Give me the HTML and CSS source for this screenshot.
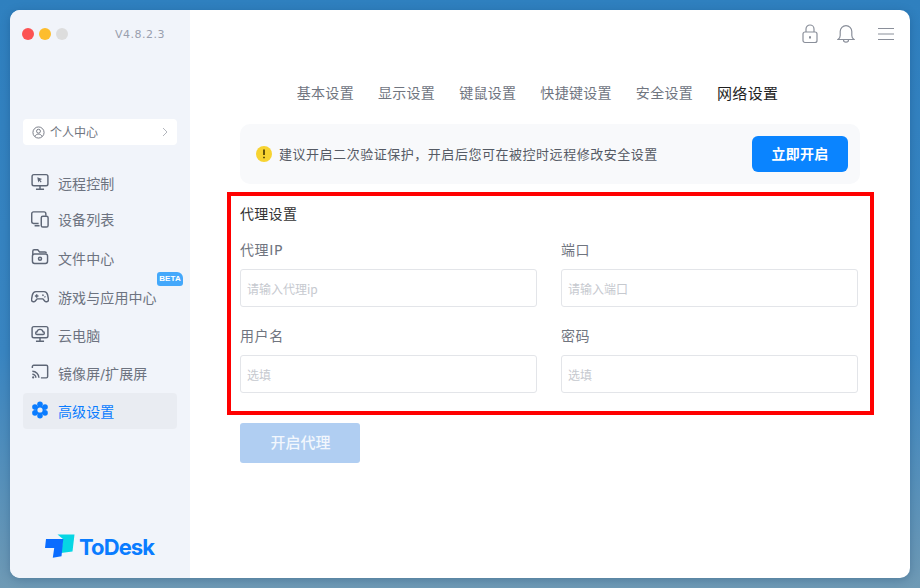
FILE: index.html
```html
<!DOCTYPE html>
<html lang="zh">
<head>
<meta charset="utf-8">
<title>ToDesk</title>
<link rel="stylesheet" href="styles.css">
</head>
<body>
<div class="window">
  <aside class="sidebar">
    <div class="titlebar">
      <div class="lights"><i class="light red"></i><i class="light yellow"></i><i class="light grey"></i></div>
      <span class="version">V4.8.2.3</span>
    </div>
    <div class="profile">
      <svg class="profile-icon" viewBox="0 0 14 14"><circle cx="7" cy="7" r="6"/><circle cx="7" cy="5.600" r="2.100"/><path d="M3.300 11.200c.6-1.800 2-2.400 3.700-2.400s3.100.6 3.700 2.400"/></svg>
      <span class="profile-name">个人中心</span>
      <svg class="chevron" viewBox="0 0 8 10"><path d="M2 1l4 4-4 4"/></svg>
    </div>
    <nav class="nav">
      <a class="item">
        <svg class="ico" viewBox="0 0 20 20"><rect x="1.200" y="1.800" width="17.600" height="12.400" rx="2"/><path d="M10 14.400v3.600M5.500 18h9"/><path class="fill" d="M7 4.800l5.400 2-2.200 1 1.600 2-1 .8-1.600-2-1.200 2z"/></svg>
        <span>远程控制</span>
      </a>
      <a class="item tight">
        <svg class="ico ico-device" viewBox="0 0 20 20"><path d="M8.500 13.800H2.800a2 2 0 0 1-2-2V3a2 2 0 0 1 2-2h11.700a2 2 0 0 1 2 2v2.400"/><rect x="11.400" y="5.800" width="7.600" height="12" rx="1.800"/><path d="M4 16.400h5.500"/></svg>
        <span>设备列表</span>
      </a>
      <a class="item wide">
        <svg class="ico" viewBox="0 0 20 20"><path d="M2 8V3.500A1.500 1.500 0 0 1 3.500 2h4l2 2.400h6a1.500 1.500 0 0 1 1.500 1.500"/><rect x="1.600" y="6.600" width="16.800" height="10.600" rx="2.400"/><circle cx="10" cy="11.900" r="1.700"/></svg>
        <span>文件中心</span>
      </a>
      <a class="item wide beta-row">
        <svg class="ico ico-game" viewBox="0 0 20 16"><path d="M5.500 1.500h9c2.300 0 3.500 1.600 4 3.700l.9 4.800c.4 2.400-2.600 3.800-4.200 1.900l-2-2.400H6.800l-2 2.400C3.200 13.800.2 12.400.6 10l.9-4.800C2 3.100 3.200 1.500 5.500 1.500z"/><path d="M4.300 6.300h4M6.300 4.300v4"/><path d="M12.700 4.800l1.200 1.200M15 6.800l1 1"/></svg>
        <span>游戏与应用中心</span>
        <b class="beta">BETA</b>
      </a>
      <a class="item">
        <svg class="ico" viewBox="0 0 20 20"><rect x="1.200" y="1.800" width="17.600" height="12.400" rx="2"/><path d="M10 14.400v3.600M5.500 18h9"/><path d="M6.800 10.500h6.400a1.500 1.500 0 0 0 .2-3 3.500 3.500 0 0 0-6.800 0 1.500 1.500 0 0 0 .2 3z"/></svg>
        <span>云电脑</span>
      </a>
      <a class="item">
        <svg class="ico" viewBox="0 0 20 20"><path d="M1.500 5.500V4A1.500 1.500 0 0 1 3 2.500h14A1.500 1.500 0 0 1 18.500 4v11a1.500 1.500 0 0 1-1.500 1.500h-6"/><path d="M1.500 9.200a7.300 7.300 0 0 1 7.300 7.300M1.500 12.600a3.900 3.900 0 0 1 3.900 3.900"/><circle class="fill" cx="2.400" cy="16" r="1.200"/></svg>
        <span>镜像屏/扩展屏</span>
      </a>
      <a class="item active">
        <svg class="ico gear" viewBox="0 0 20 20">
          <circle cx="10" cy="3.600" r="3.100"/><circle cx="15.600" cy="6.800" r="3.100"/><circle cx="15.600" cy="13.200" r="3.100"/><circle cx="10" cy="16.400" r="3.100"/><circle cx="4.400" cy="13.200" r="3.100"/><circle cx="4.400" cy="6.800" r="3.100"/><circle cx="10" cy="10" r="5"/><circle class="hole" cx="10" cy="10" r="2.900"/>
        </svg>
        <span>高级设置</span>
      </a>
    </nav>
    <div class="logo">
      <svg class="logo-mark" viewBox="0 0 32 26"><path class="cyan" d="M12.500 .5H29.500L27.500 17.500L16 19L18 5z"/><path class="blue" d="M1 5H18.300L16.500 22.300L7.800 23.700L9.200 14H0z"/></svg>
      <span class="logo-text">ToDesk</span>
    </div>
  </aside>
  <main class="main">
    <header class="topbar">
      <svg class="top-ico lock" viewBox="0 0 16 20"><path d="M4 8V5a4 4 0 0 1 8 0v3"/><rect x="1" y="8" width="14" height="10.500" rx="2"/><path d="M8 12.200v2.200" class="thick"/></svg>
      <svg class="top-ico bell" viewBox="0 0 18 20"><path d="M1 15.500c1.500-1 2.200-2.200 2.200-4V7.500a5.800 5.800 0 0 1 11.600 0v4c0 1.800.7 3 2.200 4z"/><path d="M6.500 16c0 2.800 5 2.800 5 0"/></svg>
      <svg class="top-ico menu" viewBox="0 0 16 14"><path d="M0 1.500h16M0 7h16M0 12.500h16"/></svg>
    </header>
    <div class="tabs">
      <span class="tab">基本设置</span>
      <span class="tab">显示设置</span>
      <span class="tab">键鼠设置</span>
      <span class="tab">快捷键设置</span>
      <span class="tab">安全设置</span>
      <span class="tab current">网络设置</span>
    </div>
    <div class="content">
      <div class="notice">
        <svg class="warn" viewBox="0 0 16 16"><circle cx="8" cy="8" r="8"/><path d="M8 3.600v5.300M8 10.800v1.500"/></svg>
        <span class="notice-text">建议开启二次验证保护，开启后您可在被控时远程修改安全设置</span>
        <button class="primary">立即开启</button>
      </div>
      <section class="proxy">
        <h2>代理设置</h2>
        <div class="grid">
          <label class="field"><span>代理IP</span><input placeholder="请输入代理ip"></label>
          <label class="field"><span>端口</span><input placeholder="请输入端口"></label>
          <label class="field"><span>用户名</span><input placeholder="选填"></label>
          <label class="field"><span>密码</span><input placeholder="选填"></label>
        </div>
      </section>
      <button class="start">开启代理</button>
    </div>
  </main>
</div>
</body>
</html>
```
FILE: styles.css
```css
* { box-sizing: border-box; }
html, body { height: 100%; }
body {
  margin: 0;
  padding: 10px;
  overflow: hidden;
  background: linear-gradient(180deg, #2f80bf 0%, #3a86c2 60%, #6f9ab5 100%);
  font-family: "DejaVu Sans", "Noto Sans CJK SC", sans-serif;
}
.window {
  display: flex;
  width: 900px;
  height: 568px;
  border-radius: 10px;
  overflow: hidden;
  background: #fff;
  box-shadow: 0 2px 10px rgba(0, 40, 80, .25);
}

/* sidebar */
.sidebar {
  width: 180px;
  flex: none;
  display: flex;
  flex-direction: column;
  background: #f1f4fa;
  padding: 0 13px;
}
.titlebar {
  display: flex;
  align-items: center;
  height: 48px;
}
.lights { display: flex; gap: 5px; margin-left: -1px; }
.light { width: 12px; height: 12px; border-radius: 50%; }
.red { background: #fc5353; }
.yellow { background: #fdbd2d; }
.grey { background: #dddddd; }
.version {
  margin-left: 47px;
  font-size: 11px;
  letter-spacing: .5px;
  color: #9a9fae;
}
.profile {
  display: flex;
  align-items: center;
  height: 26px;
  margin-top: 61px;
  padding: 0 9px;
  background: #fff;
  border-radius: 4px;
}
.profile-icon { width: 13px; height: 13px; fill: none; stroke: #70757f; stroke-width: 1; }
.profile-name { margin-left: 5px; margin-top: -1px; font-size: 12px; color: #6f747e; }
.chevron { width: 8px; height: 10px; margin-left: auto; margin-right: -1px; fill: none; stroke: #b3b6bd; stroke-width: 1; }
.nav {
  display: flex;
  flex-direction: column;
  gap: 2px;
  margin-top: 20px;
}
.item {
  position: relative;
  display: flex;
  align-items: center;
  height: 36px;
  padding-left: 8px;
  border-radius: 4px;
  font-size: 14px;
  letter-spacing: .1px;
  color: #6d7380;
}
.item span { margin-left: 9px; }
.tight { margin-top: -2px; }
.wide { margin-top: 1px; }
.ico {
  width: 18px;
  height: 18px;
  flex: none;
  margin-top: -3px;
  fill: none;
  stroke: #5e6676;
  stroke-width: 1.600;
}
.ico .fill { fill: #5e6676; stroke: none; }
.ico.ico-device { margin-top: 1px; }
.ico.ico-game { height: 15px; margin-top: 0; }
.active { background: #e9ecf2; color: #0a7cff; }
.ico.gear { fill: #0a7cff; stroke: none; }
.ico.gear .hole { fill: #e9ecf2; }
.beta {
  position: absolute;
  top: -7px;
  right: -6px;
  width: 26px;
  height: 14px;
  border-radius: 3px 6px 3px 3px;
  background: #44a8fb;
  color: #fff;
  font: bold 8px/14px "Liberation Sans", sans-serif;
  text-align: center;
}
.logo {
  display: flex;
  align-items: center;
  gap: 3px;
  margin-top: auto;
  margin-bottom: 18px;
  padding-left: 22px;
}
.logo-mark { width: 32px; height: 26px; }
.cyan { fill: #06d6e4; }
.blue { fill: #0a6cff; }
.logo-text {
  margin-left: -1px;
  font: 700 22px/26px "Inter", sans-serif;
  letter-spacing: -.9px;
  color: #0a7cff;
}

/* main */
.main { flex: 1; display: flex; flex-direction: column; min-width: 0; }
.topbar {
  display: flex;
  align-items: center;
  justify-content: flex-end;
  height: 48px;
  padding-right: 16px;
}
.top-ico { fill: none; stroke: #8a8f9a; stroke-width: 1.200; }
.lock { width: 16px; height: 20px; }
.bell { width: 18px; height: 20px; margin-left: 19px; }
.menu { width: 16px; height: 14px; margin-left: 23px; }
.thick { stroke-width: 2; }
.tabs {
  display: flex;
  justify-content: center;
  align-items: center;
  gap: 24px;
  height: 24px;
  margin-top: 22px;
  padding-right: 25px;
  font-size: 14px;
  letter-spacing: .3px;
  color: #70757f;
}
.current { font: 400 15px "Noto Sans CJK SC", sans-serif; color: #1f1f1f; }
.content { padding: 0 50px; }
.notice {
  display: flex;
  align-items: center;
  height: 60px;
  margin-top: 20px;
  padding: 0 12px 0 16px;
  border-radius: 10px;
  background: #f8f9fb;
}
.warn { width: 16px; height: 16px; flex: none; }
.warn circle { fill: #f7d331; }
.warn path { stroke: #4c3f05; stroke-width: 1.700; fill: none; }
.notice-text { margin-left: 7px; margin-top: -2px; font-size: 13px; letter-spacing: .53px; color: #555a64; }
.primary {
  margin-left: auto;
  width: 96px;
  height: 36px;
  padding: 0 0 2px;
  border: 0;
  border-radius: 6px;
  background: #0a84ff;
  color: #fff;
  font: 700 14px "Noto Sans CJK SC", sans-serif;
  letter-spacing: .2px;
}
.proxy {
  margin: 8px -14px 0 -13px;
  height: 223px;
  padding: 7px 9px 0;
  border: 4px solid #ff0000;
}
.proxy h2 {
  margin: 0;
  font: 400 14px/20px "Noto Sans CJK SC", sans-serif;
  letter-spacing: .3px;
  color: #333;
}
.grid {
  display: grid;
  grid-template-columns: 297px 297px;
  column-gap: 24px;
  row-gap: 19px;
  margin-top: 17px;
}
.field { display: block; }
.field span {
  display: block;
  font-size: 14px;
  line-height: 20px;
  letter-spacing: .6px;
  color: #70757f;
}
.field input {
  display: block;
  width: 100%;
  height: 38px;
  margin-top: 9px;
  padding: 0 6px;
  border: 1px solid #e3e5e9;
  border-radius: 3px;
  background: #fff;
  font-family: "Noto Sans CJK SC", sans-serif;
  font-size: 12px;
  outline: 0;
}
.field input::placeholder { color: #c6c9cf; opacity: 1; }
.start {
  display: block;
  width: 120px;
  height: 40px;
  margin-top: 8px;
  padding: 0 0 3px 1px;
  border: 0;
  border-radius: 3px;
  background: #b0ceF2;
  color: #f2f7fd;
  font: 500 15px "Noto Sans CJK SC", sans-serif;
}
```
